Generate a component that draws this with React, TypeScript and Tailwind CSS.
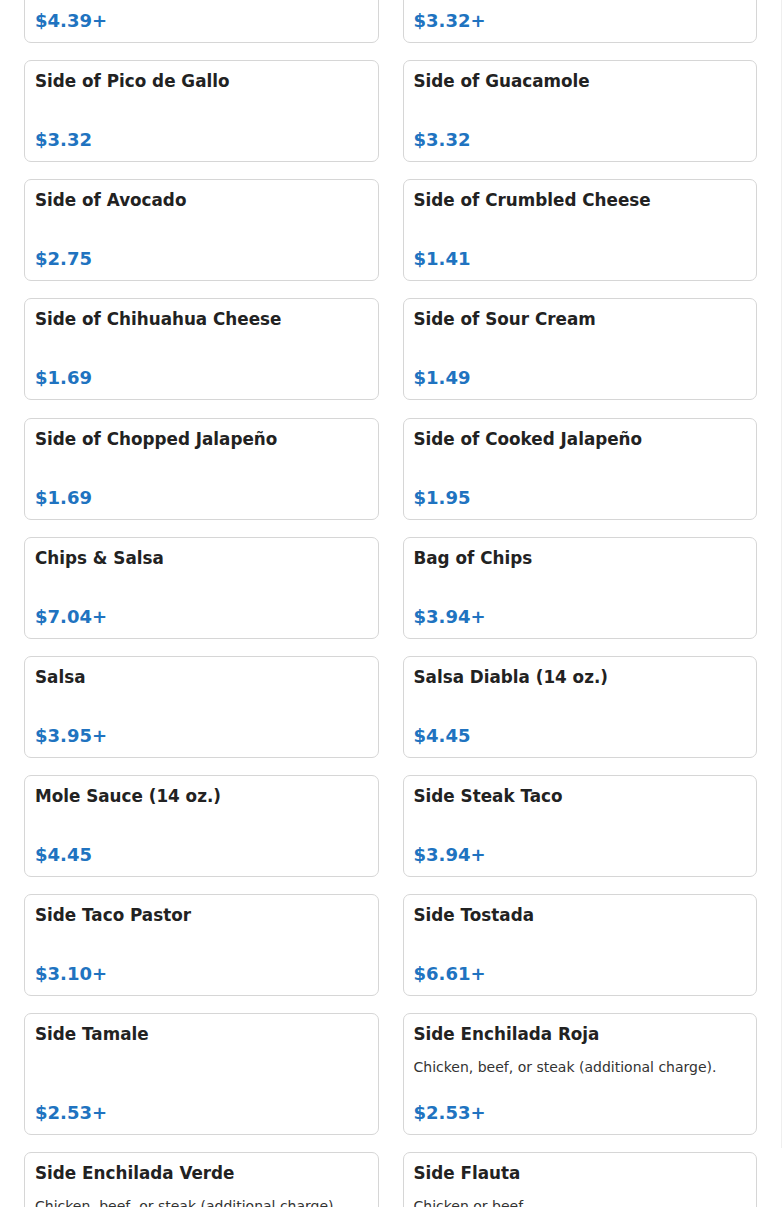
import React from "react";

type Item = { title: string; price: string; desc?: string };

const rows: [Item, Item][] = [
  [
    { title: "Side of Rice", price: "$4.39+" },
    { title: "Side of Refried Beans", price: "$3.32+" },
  ],
  [
    { title: "Side of Pico de Gallo", price: "$3.32" },
    { title: "Side of Guacamole", price: "$3.32" },
  ],
  [
    { title: "Side of Avocado", price: "$2.75" },
    { title: "Side of Crumbled Cheese", price: "$1.41" },
  ],
  [
    { title: "Side of Chihuahua Cheese", price: "$1.69" },
    { title: "Side of Sour Cream", price: "$1.49" },
  ],
  [
    { title: "Side of Chopped Jalapeño", price: "$1.69" },
    { title: "Side of Cooked Jalapeño", price: "$1.95" },
  ],
  [
    { title: "Chips & Salsa", price: "$7.04+" },
    { title: "Bag of Chips", price: "$3.94+" },
  ],
  [
    { title: "Salsa", price: "$3.95+" },
    { title: "Salsa Diabla (14 oz.)", price: "$4.45" },
  ],
  [
    { title: "Mole Sauce (14 oz.)", price: "$4.45" },
    { title: "Side Steak Taco", price: "$3.94+" },
  ],
  [
    { title: "Side Taco Pastor", price: "$3.10+" },
    { title: "Side Tostada", price: "$6.61+" },
  ],
  [
    { title: "Side Tamale", price: "$2.53+" },
    {
      title: "Side Enchilada Roja",
      price: "$2.53+",
      desc: "Chicken, beef, or steak (additional charge).",
    },
  ],
  [
    {
      title: "Side Enchilada Verde",
      price: "$2.53+",
      desc: "Chicken, beef, or steak (additional charge).",
    },
    { title: "Side Flauta", price: "$2.53+", desc: "Chicken or beef." },
  ],
];

function Card({ item }: { item: Item }) {
  return (
    <div className="flex flex-col rounded-[7px] border border-[#d6d6d6] bg-white p-2.5">
      <div className="text-[16.8px] font-bold leading-[20px] text-[#222222]">
        {item.title}
      </div>
      {item.desc ? (
        <div className="mt-[13px] text-[14px] leading-[20px] text-[#333333]">
          {item.desc}
        </div>
      ) : null}
      <div
        className={
          "mt-auto text-[18px] font-bold leading-[22px] text-[#2073c0] " +
          (item.desc ? "pt-[25px]" : "pt-[38px]")
        }
      >
        {item.price}
      </div>
    </div>
  );
}

export default function App() {
  return (
    <div
      className="h-[1207px] w-[782px] overflow-hidden bg-white"
      style={{ fontFamily: '"DejaVu Sans", Verdana, sans-serif' }}
    >
      <div className="h-full w-full border-r border-[#efefef]">
        <div className="-mt-[59px] flex flex-col gap-[17.125px] px-6">
          {rows.map((r, i) => (
            <div key={i} className="grid grid-cols-2 gap-6">
              <Card item={r[0]} />
              <Card item={r[1]} />
            </div>
          ))}
        </div>
      </div>
    </div>
  );
}
